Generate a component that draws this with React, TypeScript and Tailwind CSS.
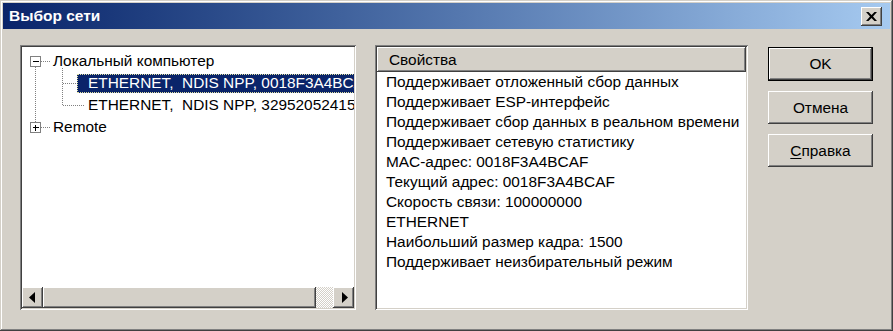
import React from "react";

const raised =
  "bg-[#d4d0c8] shadow-[inset_-1px_-1px_#404040,inset_1px_1px_#ffffff,inset_-2px_-2px_#808080,inset_2px_2px_#d4d0c8]";
const sunken =
  "shadow-[inset_1px_1px_#808080,inset_-1px_-1px_#ffffff,inset_2px_2px_#404040,inset_-2px_-2px_#d4d0c8]";

const props = [
  "Поддерживает отложенный сбор данных",
  "Поддерживает ESP-интерфейс",
  "Поддерживает сбор данных в реальном времени",
  "Поддерживает сетевую статистику",
  "MAC-адрес: 0018F3A4BCAF",
  "Текущий адрес: 0018F3A4BCAF",
  "Скорость связи: 100000000",
  "ETHERNET",
  "Наибольший размер кадра: 1500",
  "Поддерживает неизбирательный режим",
];

function Arrow({ dir }: { dir: "left" | "right" }) {
  return (
    <svg width="6" height="11" viewBox="0 0 6 11">
      {dir === "left" ? (
        <path d="M6 0 L0 5.5 L6 11 Z" fill="#000" />
      ) : (
        <path d="M0 0 L6 5.5 L0 11 Z" fill="#000" />
      )}
    </svg>
  );
}

function TreeLines() {
  return (
    <svg className="absolute left-0 top-0" width="80" height="100" shapeRendering="crispEdges">
      <g stroke="#808080" strokeWidth="1" strokeDasharray="1 1" fill="none">
        <line x1="13.5" y1="20" x2="13.5" y2="75" />
        <line x1="19" y1="14.5" x2="29" y2="14.5" />
        <line x1="19" y1="80.5" x2="29" y2="80.5" />
        <line x1="40.5" y1="21" x2="40.5" y2="58" />
        <line x1="41" y1="36.5" x2="55" y2="36.5" />
        <line x1="41" y1="58.5" x2="62" y2="58.5" />
      </g>
      <g fill="#fff" stroke="#808080">
        <rect x="8.5" y="9.5" width="10" height="10" />
        <rect x="8.5" y="75.5" width="10" height="10" />
      </g>
      <g stroke="#000">
        <line x1="11" y1="14.5" x2="17" y2="14.5" />
        <line x1="11" y1="80.5" x2="17" y2="80.5" />
        <line x1="13.5" y1="78" x2="13.5" y2="84" />
      </g>
    </svg>
  );
}

export default function App() {
  return (
    <div className="w-[893px] h-[331px] bg-[#d4d0c8] p-[3px] flex flex-col font-['Liberation_Sans',Arial,sans-serif] text-[15.4px] text-black shadow-[inset_-1px_-1px_#404040,inset_1px_1px_#d4d0c8,inset_-2px_-2px_#808080,inset_2px_2px_#ffffff]">
      {/* Title bar */}
      <div className="h-[26px] flex items-center justify-between pl-[6px] pr-[8px] bg-gradient-to-r from-[#0a246a] to-[#a6caf0]">
        <span className="text-white font-bold text-[15.5px] leading-none">Выбор сети</span>
        <div className={`${raised} w-[21px] h-[19px] flex items-center justify-center`}>
          <svg width="11" height="9" viewBox="0 0 11 9">
            <path d="M0 0h2.5l3 3 3-3H11L7 4.5 11 9H8.5l-3-3-3 3H0l4-4.5z" fill="#000" />
          </svg>
        </div>
      </div>

      <div className="flex flex-1 pt-[16px] pl-[17px] pb-[18px]">
        {/* Tree view */}
        <div className={`${sunken} bg-white w-[336px] p-[2px] flex flex-col`}>
          <div className="relative flex-1 overflow-hidden pt-[3px]">
            <TreeLines />
            <div className="h-[22px] flex items-center pl-[31px] whitespace-pre">Локальный компьютер</div>
            <div className="h-[22px] flex items-center pl-[55px] whitespace-pre">
              <div className="h-[19px] flex items-center pl-[11px] pr-[4px] bg-[#0a246a] text-white outline outline-1 outline-dotted outline-[#e0e0a0] -outline-offset-1">
                ETHERNET,  NDIS NPP, 0018F3A4BCAF
              </div>
            </div>
            <div className="h-[22px] flex items-center pl-[66px] whitespace-pre">ETHERNET,  NDIS NPP, 32952052415A</div>
            <div className="h-[22px] flex items-center pl-[31px] whitespace-pre">Remote</div>
          </div>
          <div className="h-[21px] flex">
            <div className={`${raised} w-[21px] flex items-center justify-center pr-[2px]`}>
              <Arrow dir="left" />
            </div>
            <div className={`${raised} flex-1`} />
            <div className="w-[17px] bg-[repeating-conic-gradient(#ffffff_0_25%,#d4d0c8_0_50%)] bg-[length:2px_2px]" />
            <div className={`${raised} w-[21px] flex items-center justify-center pl-[2px]`}>
              <Arrow dir="right" />
            </div>
          </div>
        </div>

        {/* Properties list */}
        <div className={`${sunken} bg-white w-[373px] ml-[19px] p-[2px] flex flex-col`}>
          <div className={`${raised} h-[25px] flex items-center pl-[12px]`}>Свойства</div>
          <div className="flex flex-col pl-[9px]">
            {props.map((p) => (
              <div key={p} className="h-[20px] flex items-center whitespace-pre">
                {p}
              </div>
            ))}
          </div>
        </div>

        {/* Buttons */}
        <div className="ml-[20px] pt-[2px] flex flex-col gap-[10px] w-[105px]">
          <div className="border border-black">
            <div className={`${raised} h-[32px] flex items-center justify-center`}>OK</div>
          </div>
          <div className={`${raised} h-[33px] flex items-center justify-center`}>Отмена</div>
          <div className={`${raised} h-[33px] flex items-center justify-center`}>
            <span>
              <span className="underline underline-offset-2">С</span>правка
            </span>
          </div>
        </div>
      </div>
    </div>
  );
}
